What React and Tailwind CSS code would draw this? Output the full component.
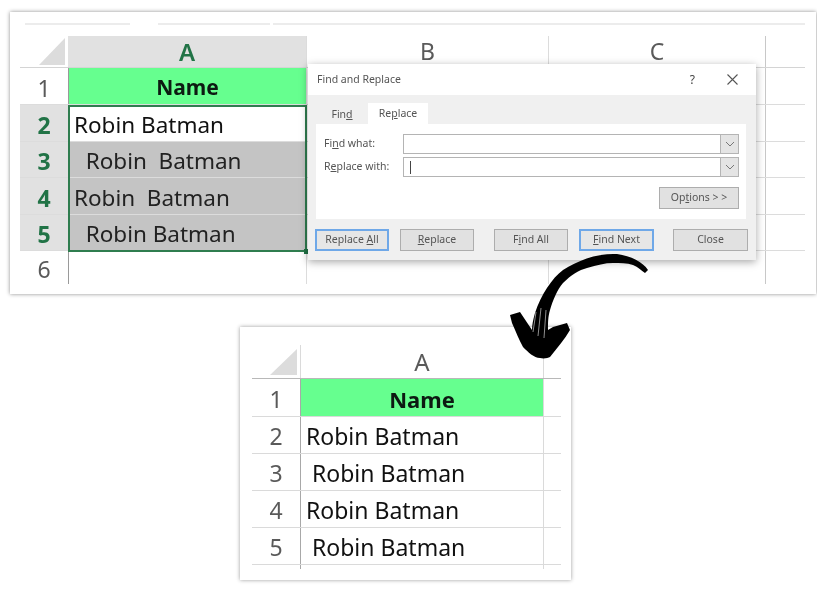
const FONT = "font-['Noto_Sans','Open_Sans',sans-serif]";

function TopRow({ n, h, active, cell, cellClass = "" }) {
  return (
    <div className="flex w-[785px] border-b border-[#dcdcdc]" style={{ height: h }}>
      <div
        className={`w-[48px] flex items-center justify-center pt-[4px] text-[23px] ${
          active ? "bg-[#e1e1e1] text-[#217346] font-bold" : "text-[#5a5a5a]"
        }`}
      >
        {n}
      </div>
      <div
        className={`w-[238px] border-l border-[#9a9a9a] flex items-center pt-[3px] whitespace-pre text-[22.5px] text-[#111] ${cellClass}`}
      >
        {cell}
      </div>
      <div className="w-[242px] border-l border-[#dcdcdc]" />
      <div className="w-[217px] border-l border-[#dcdcdc]" />
      <div className="w-[40px] border-l border-[#c8c8c8]" />
    </div>
  );
}

function Btn({ children, w, blue, className = "" }) {
  return (
    <div
      className={`h-[22px] flex items-center justify-center text-[10.5px] text-[#555] ${
        blue ? "border-2 border-[#6fa8e8] bg-[#e6e6e6]" : "border border-[#adadad] bg-[#e1e1e1]"
      } ${className}`}
      style={{ width: w }}
    >
      {children}
    </div>
  );
}

function DialogInput({ caret }) {
  return (
    <div className="flex h-[20px] w-[336px] border border-[#b4b4b4] bg-white">
      <div className="flex-1 flex items-center pl-[6px]">
        {caret && <div className="w-px h-[13px] bg-[#444]" />}
      </div>
      <div className="w-[18px] border-l border-[#b4b4b4] bg-[#e4e4e4] flex items-center justify-center">
        <svg width="10" height="6" viewBox="0 0 10 6" fill="none" stroke="#777" strokeWidth="1">
          <path d="M1 1l4 4 4-4" />
        </svg>
      </div>
    </div>
  );
}

function Dialog() {
  return (
    <div className="absolute left-[298px] top-[52px] w-[448px] h-[196px] flex flex-col bg-[#f0f0f0] shadow-[0_2px_8px_rgba(0,0,0,0.35)]">
      <div className="h-[31px] bg-white flex items-center justify-between pl-[9px] pr-[18px] text-[10.5px] text-[#555]">
        <span>Find and Replace</span>
        <div className="flex items-center gap-[32px]">
          <span className="text-[12px] text-[#444]">?</span>
          <svg width="11" height="11" viewBox="0 0 11 11" stroke="#555" strokeWidth="1.1">
            <path d="M0.5 0.5l10 10M10.5 0.5l-10 10" />
          </svg>
        </div>
      </div>
      <div className="flex pl-[8px] pt-[8px] h-[29px] items-end text-[10.5px] text-[#555]">
        <div className="w-[52px] h-[20px] flex items-center justify-center pt-[2px]">
          <span>
            Fin<span className="underline">d</span>
          </span>
        </div>
        <div className="w-[60px] h-[21px] bg-white flex items-center justify-center pt-[1px]">
          <span>
            Re<span className="underline">p</span>lace
          </span>
        </div>
      </div>
      <div className="mx-[8px] h-[95px] w-[430px] bg-white pt-[10px] pl-[8px] text-[10.5px] text-[#555]">
        <div className="flex items-center h-[20px]">
          <span className="w-[79px]">
            Fi<span className="underline">n</span>d what:
          </span>
          <DialogInput />
        </div>
        <div className="flex items-center h-[20px] mt-[3px]">
          <span className="w-[79px]">
            R<span className="underline">e</span>place with:
          </span>
          <DialogInput caret />
        </div>
        <div className="flex justify-end mt-[10px] mr-[7px]">
          <Btn w={80}>
            <span>
              Op<span className="underline">t</span>ions &gt; &gt;
            </span>
          </Btn>
        </div>
      </div>
      <div className="flex mt-[10px] ml-[7px]">
        <Btn w={74} blue>
          <span>
            Replace <span className="underline">A</span>ll
          </span>
        </Btn>
        <Btn w={74} className="ml-[11px]">
          <span>
            <span className="underline">R</span>eplace
          </span>
        </Btn>
        <Btn w={74} className="ml-[20px]">
          <span>
            F<span className="underline">i</span>nd All
          </span>
        </Btn>
        <Btn w={75} blue className="ml-[11px]">
          <span>
            <span className="underline">F</span>ind Next
          </span>
        </Btn>
        <Btn w={75} className="ml-[19px]">
          Close
        </Btn>
      </div>
    </div>
  );
}

function TopCard() {
  return (
    <div className="relative ml-[10px] mt-[12px] w-[806px] h-[282px] bg-white shadow-[0_0_4px_rgba(0,0,0,0.45)] pl-[10px] pt-[11px]">
      <div className="flex h-[2px] pl-[5px] pr-[11px]">
        <div className="w-[105px] bg-[#ececec]" />
        <div className="w-[112px] ml-[28px] bg-[#ececec]" />
        <div className="flex-1 ml-[3px] bg-[#ececec]" />
      </div>
      <div className="flex w-[785px] h-[32px] mt-[11px] border-b border-[#d4d4d4]">
        <div className="w-[48px] flex items-end justify-end pr-[3px] pb-[2px]">
          <svg width="26" height="27" viewBox="0 0 26 27">
            <path d="M26 0V27H0Z" fill="#dcdcdc" />
          </svg>
        </div>
        <div className="w-[238px] bg-[#e1e1e1] flex items-center justify-center text-[24px] font-semibold text-[#217346]">
          A
        </div>
        <div className="w-[242px] border-l border-[#dcdcdc] flex items-center justify-center text-[23px] text-[#5a5a5a]">
          B
        </div>
        <div className="w-[217px] border-l border-[#dcdcdc] flex items-center justify-center text-[23px] text-[#5a5a5a]">
          C
        </div>
        <div className="w-[40px] border-l border-[#c8c8c8]" />
      </div>
      <TopRow
        n="1"
        h={37}
        cell="Name"
        cellClass="bg-[#66ff8f] justify-center font-bold !text-[21px] !text-[#0d1a12]"
      />
      <TopRow n="2" h={37} active cell="Robin Batman" cellClass="pl-[5px]" />
      <TopRow n="3" h={36} active cell="  Robin  Batman" cellClass="pl-[5px] bg-[#c4c4c4] text-[#222]" />
      <TopRow n="4" h={37} active cell="Robin  Batman" cellClass="pl-[5px] bg-[#c4c4c4] text-[#222]" />
      <TopRow n="5" h={36} active cell="  Robin Batman" cellClass="pl-[5px] bg-[#c4c4c4] text-[#222]" />
      <div className="flex h-[33px]">
        <div className="w-[48px] flex items-center justify-center pt-[3px] text-[23px] text-[#5a5a5a]">6</div>
        <div className="w-[238px] border-l border-[#9a9a9a]" />
        <div className="w-[242px] border-l border-[#dcdcdc]" />
        <div className="w-[217px] border-l border-[#dcdcdc]" />
        <div className="w-[1px] bg-[#c8c8c8]" />
      </div>
      <div className="absolute left-[58px] top-[93px] w-[239px] h-[147px] border-2 border-[#2f7d4f]" />
      <div className="absolute left-[294px] top-[237px] w-[5px] h-[5px] bg-[#217346]" />
      <Dialog />
    </div>
  );
}

function BottomRow({ n, h = 37, cell, cellClass = "" }) {
  return (
    <div className="flex w-[309px] border-b border-[#dadada]" style={{ height: h }}>
      <div className="w-[48px] flex items-center justify-center pt-[3px] text-[23px] text-[#5a5a5a]">{n}</div>
      <div
        className={`w-[243px] border-l border-[#a8a8a8] flex items-center pt-[3px] whitespace-pre text-[23px] text-[#111] ${cellClass}`}
      >
        {cell}
      </div>
      <div className="w-[18px] border-l border-[#dadada]" />
    </div>
  );
}

function BottomCard() {
  return (
    <div className="ml-[240px] mt-[33px] w-[331px] h-[253px] bg-white shadow-[0_0_4px_rgba(0,0,0,0.4)] pl-[12px] pt-[18px]">
      <div className="flex w-[309px] h-[34px] border-b border-[#b8b8b8]">
        <div className="w-[48px] flex items-end justify-end pr-[3px] pb-[3px]">
          <svg width="27" height="26" viewBox="0 0 27 26">
            <path d="M27 0V26H0Z" fill="#dcdcdc" />
          </svg>
        </div>
        <div className="w-[243px] border-l border-[#dadada] flex items-center justify-center text-[24px] text-[#5a5a5a]">
          A
        </div>
        <div className="w-[18px] border-l border-[#dadada]" />
      </div>
      <BottomRow n="1" h={38} cell="Name" cellClass="bg-[#66ff8f] justify-center font-bold !text-[22px] !text-[#0d1a12]" />
      <BottomRow n="2" cell="Robin Batman" cellClass="pl-[5px]" />
      <BottomRow n="3" cell=" Robin Batman" cellClass="pl-[5px]" />
      <BottomRow n="4" cell="Robin Batman" cellClass="pl-[5px]" />
      <BottomRow n="5" cell=" Robin Batman" cellClass="pl-[5px]" />
      <div className="flex h-[4px]">
        <div className="w-[48px]" />
        <div className="w-[243px] border-l border-[#a8a8a8]" />
        <div className="w-[1px] bg-[#dadada]" />
      </div>
    </div>
  );
}

function Arrow() {
  return (
    <svg className="absolute left-[490px] top-[240px]" width="170" height="130" viewBox="0 0 170 130">
      <path
        d="M158 30C153 22 141 16 127 14C108 13 88 20 73 30C62 38 51 55 45 73C43 80 42 85 42 90L30 72L20 75L22 83C26 92 29 100 33 107C38 112 44 118 50 118C54 119 58 118 60 117C67 108 75 99 80 90L77 83L63 87L58 90C58 82 58 77 60 70C63 60 67 50 73 43C81 35 89 30 97 28C107 25 115 23 123 23C130 23 137 23 143 25C148 27 152 31 155 33Z"
        fill="#000"
      />
      <path d="M46 72L43 92M51 68L48 96M56 70L54 98" stroke="#fff" strokeWidth="0.7" fill="none" opacity="0.8" />
    </svg>
  );
}

export default function App() {
  return (
    <div className={`relative w-[817px] h-[612px] overflow-hidden bg-white blur-[0.5px] ${FONT}`}>
      <TopCard />
      <BottomCard />
      <Arrow />
    </div>
  );
}
